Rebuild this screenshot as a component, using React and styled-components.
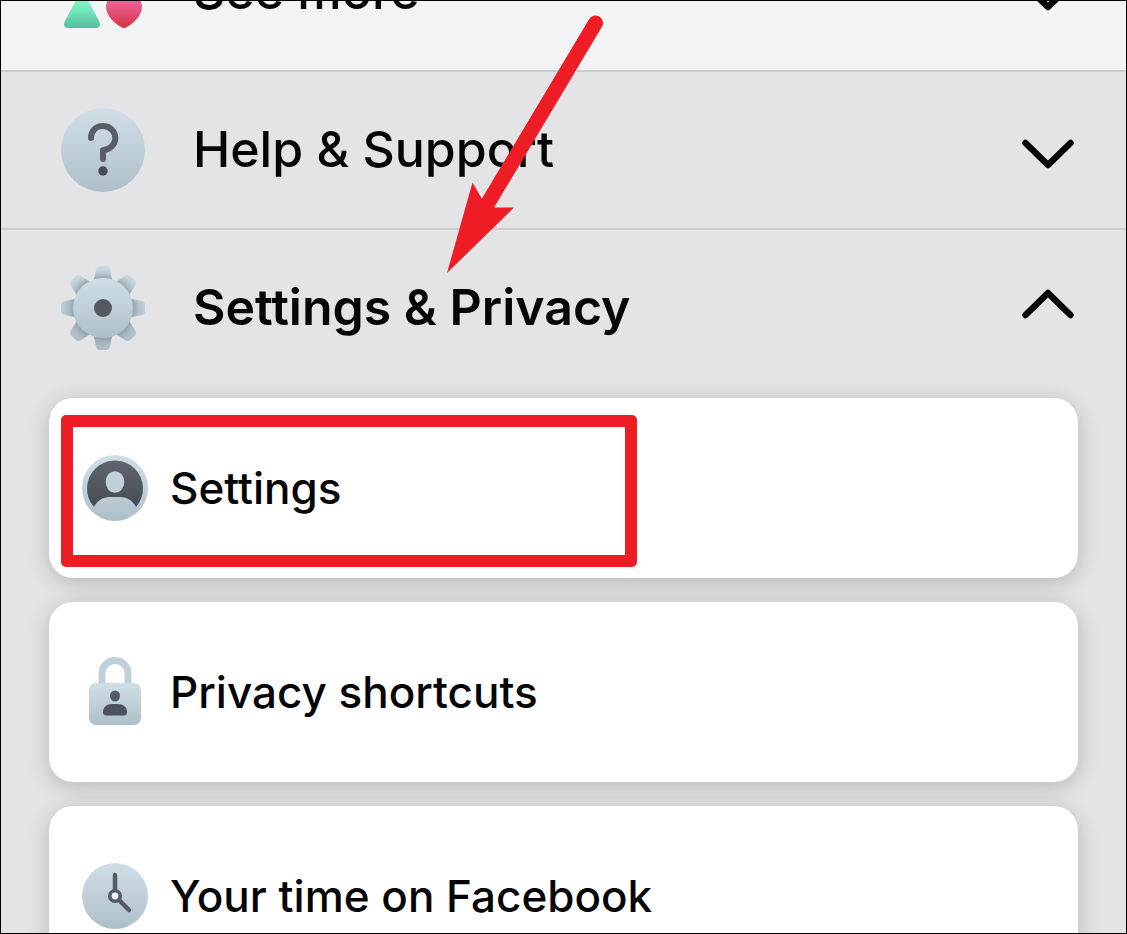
import { useState } from 'react';
import styled, { createGlobalStyle } from 'styled-components';

const GlobalStyle = createGlobalStyle`

*{
    box-sizing: border-box;
}

body{
    margin: 0;
    background: #e4e4e6;
    font-family: Inter, "Liberation Sans", sans-serif;
    color: #050505;
}

button{
    font: inherit;
    color: inherit;
}
`;

const Gradients = () => (
    <HiddenDefs aria-hidden="true" width="0" height="0">
        <defs>
            <linearGradient id="steel" x1="0" y1="0" x2="0" y2="1">
                <stop offset="0" stopColor="#d0dfe6" />
                <stop offset="1" stopColor="#afbfca" />
            </linearGradient>
            <linearGradient id="slate" x1="0" y1="0" x2="0" y2="1">
                <stop offset="0" stopColor="#606570" />
                <stop offset="1" stopColor="#464b53" />
            </linearGradient>
            <linearGradient id="green" x1="0" y1="0" x2="0" y2="1">
                <stop offset="0.1" stopColor="#7ff5c5" />
                <stop offset="0.5" stopColor="#76e9bb" />
                <stop offset="1" stopColor="#51bd9b" />
            </linearGradient>
            <linearGradient id="pink" x1="0" y1="0" x2="0" y2="1">
                <stop offset="0.1" stopColor="#ec67a0" />
                <stop offset="0.9" stopColor="#d93a4b" />
            </linearGradient>
            <radialGradient id="toothShade" gradientUnits="userSpaceOnUse" cx="42" cy="42" r="42">
                <stop offset="0.7" stopColor="#66757f" stopOpacity="0.5" />
                <stop offset="0.88" stopColor="#82929c" stopOpacity="0.15" />
                <stop offset="1" stopColor="#82929c" stopOpacity="0" />
            </radialGradient>
            <linearGradient id="gearSteel" gradientUnits="userSpaceOnUse" x1="0" y1="0" x2="0" y2="84">
                <stop offset="0" stopColor="#d0dfe6" />
                <stop offset="1" stopColor="#afbfca" />
            </linearGradient>
        </defs>
    </HiddenDefs>
);

const ShapesIcon = () => (
    <RowIcon viewBox="0 0 84 84" aria-hidden="true">
        <rect x="3" y="6" width="36" height="34" rx="6" fill="#5aa7f5" />
        <circle cx="63" cy="23" r="18" fill="#f7c64b" />
        <path d="M17.500 45.500Q21 39.500 24.500 45.500L38.300 71.500Q40.500 78 34.500 78H7.500Q1.500 78 3.700 71.500Z" fill="url(#green)" />
        <path d="M63 48C56 43 45 47 45 56.500C45 66 54 74 61 77.500Q63 78.500 65 77.500C72 74 81 66 81 56.500C81 47 70 43 63 48Z" fill="url(#pink)" />
    </RowIcon>
);

const HelpIcon = () => (
    <RowIcon viewBox="0 0 84 84" aria-hidden="true">
        <circle cx="42" cy="42" r="42" fill="url(#steel)" />
        <path d="M30 30C30 22.500 35.300 18 42 18C49 18 54.300 23.500 54.300 30C54.300 36.500 49 41.800 42 42.300V51" fill="none" stroke="#595e68" strokeWidth="6" strokeLinecap="round" strokeLinejoin="round" />
        <circle cx="42" cy="63" r="4.700" fill="#484c52" />
    </RowIcon>
);

const TOOTH = 'M31.500 20L35 3.500Q35.700 0 39 0H45Q48.300 0 49 3.500L52.500 20Z';
const ANGLES = [0, 45, 90, 135, 180, 225, 270, 315];

const GearIcon = () => (
    <RowIcon viewBox="0 0 84 84" aria-hidden="true">
        <clipPath id="teeth">
            {ANGLES.map((angle) => (
                <path key={angle} d={TOOTH} transform={`rotate(${angle} 42 42)`} />
            ))}
        </clipPath>
        <g clipPath="url(#teeth)">
            <rect width="84" height="84" fill="url(#gearSteel)" />
            <rect width="84" height="84" fill="url(#toothShade)" />
        </g>
        <circle cx="42" cy="42" r="30" fill="url(#steel)" />
        <circle cx="42" cy="42" r="9" fill="#545961" />
    </RowIcon>
);

const ProfileIcon = () => (
    <CardIcon viewBox="0 0 66 66" aria-hidden="true">
        <circle cx="33" cy="33" r="33" fill="url(#steel)" />
        <path d="M12 52A28 28 0 1 1 54 52C51 46 45.500 42 38 42H28C20.500 42 15 46 12 52Z" fill="url(#slate)" />
        <ellipse cx="33" cy="27" rx="9.300" ry="10.800" fill="#c0cfd8" />
    </CardIcon>
);

const LockIcon = () => (
    <CardIcon viewBox="0 0 66 66" aria-hidden="true">
        <path d="M20 28V14.500A13 13 0 0 1 46 14.500V28" fill="none" stroke="#c0d0d9" strokeWidth="7" />
        <rect x="7" y="24" width="52" height="42" rx="7" fill="url(#steel)" />
        <ellipse cx="33" cy="37" rx="5" ry="5.500" fill="#555a64" />
        <path d="M21 53C21 48 25 45 30 45H36C41 45 45 48 45 53Q45 56.500 42 56.500H24Q21 56.500 21 53Z" fill="#4e525c" />
    </CardIcon>
);

const ClockIcon = () => (
    <CardIcon viewBox="0 0 66 66" aria-hidden="true">
        <circle cx="33" cy="33" r="33" fill="url(#steel)" />
        <path d="M33 12V33L47 47" fill="none" stroke="#555a64" strokeWidth="4.500" strokeLinecap="round" />
        <circle cx="33" cy="33" r="5.200" fill="#f4f6f8" stroke="#555a64" strokeWidth="3.600" />
    </CardIcon>
);

const Chevron = ({ open }) => (
    <ChevronIcon viewBox="0 0 52 36" aria-hidden="true">
        <path d={open ? 'M3.500 25L26 3L48.500 25' : 'M3.500 11L26 33L48.500 11'} />
    </ChevronIcon>
);

const Section = ({ icon, title, light, last, strong, defaultOpen = false, children }) => {
    const [open, setOpen] = useState(defaultOpen);

    return (
        <StyledSection $light={light} $last={last}>
            <SectionButton type="button" aria-expanded={open} onClick={() => setOpen(!open)}>
                {icon}
                <SectionTitle $strong={strong}>{title}</SectionTitle>
                <Chevron open={open} />
            </SectionButton>
            {open && children}
        </StyledSection>
    );
};

const Card = ({ icon, label, marked }) => (
    <StyledCard href="#">
        {icon}
        <span>{label}</span>
        {marked && <Marker />}
    </StyledCard>
);

export default function App() {
    return (
        <Screen>
            <GlobalStyle />
            <Gradients />
            <Menu>
                <Section icon={<ShapesIcon />} title="See more" light />
                <Section icon={<HelpIcon />} title="Help & Support" />
                <Section icon={<GearIcon />} title="Settings & Privacy" strong last defaultOpen>
                    <Cards>
                        <Card icon={<ProfileIcon />} label="Settings" marked />
                        <Card icon={<LockIcon />} label="Privacy shortcuts" />
                        <Card icon={<ClockIcon />} label="Your time on Facebook" />
                    </Cards>
                </Section>
            </Menu>
            <Arrow viewBox="0 0 170 266" aria-hidden="true">
                <path d="M155.500 15L48 195" stroke="#ee1d25" strokeWidth="15" strokeLinecap="round" />
                <path d="M7 265L32.500 174.500L42 191L55 199.500H74Z" fill="#ee1d25" />
            </Arrow>
        </Screen>
    );
}

const Screen = styled.main`
    position: relative;
    height: 100vh;
    overflow: hidden;
    border: 1px solid #000;
`;

const HiddenDefs = styled.svg`
    position: absolute;
`;

/* the list is scrolled past the top of the first row */
const Menu = styled.div`
    margin-top: -87px;
`;

const StyledSection = styled.section`
    background: ${({ $light }) => ($light ? '#f2f3f5' : '#e4e4e6')};
    border-bottom: ${({ $last }) => ($last ? '0' : '2px solid #cbcbcd')};
`;

const SectionButton = styled.button`
    width: 100%;
    height: 156px;
    padding: 0 52px 0 60px;

    display: flex;
    align-items: center;
    gap: 48px;

    background: none;
    border: 0;
    text-align: left;
    cursor: pointer;
`;

const SectionTitle = styled.span`
    flex: 1;
    padding-bottom: 2px;
    font-size: 50px;
    line-height: 60px;
    font-weight: ${({ $strong }) => ($strong ? 600 : 500)};
`;

const RowIcon = styled.svg`
    flex: none;
    width: 84px;
    height: 84px;
`;

const CardIcon = styled.svg`
    flex: none;
    width: 66px;
    height: 66px;
    overflow: visible;
`;

const ChevronIcon = styled.svg`
    flex: none;
    width: 52px;
    height: 36px;
    overflow: visible;

    path{
        fill: none;
        stroke: #050505;
        stroke-width: 6.500;
        stroke-linecap: round;
        stroke-linejoin: round;
    }
`;

const Cards = styled.div`
    padding: 12px 48px 24px;

    display: flex;
    flex-direction: column;
    gap: 24px;
`;

const StyledCard = styled.a`
    position: relative;
    min-height: 180px;
    padding: 0 33px;

    display: flex;
    align-items: center;
    gap: 22px;

    background: #fff;
    border-radius: 24px;
    box-shadow: 0 4px 22px rgba(0,0,0,.2);

    color: #050505;
    font-size: 44px;
    line-height: 54px;
    font-weight: 500;
    text-decoration: none;
`;

const Marker = styled.span`
    position: absolute;
    top: 17px;
    left: 12px;
    width: 576px;
    height: 152px;
    border: 12px solid #ee1d25;
    border-radius: 5px;
    pointer-events: none;
`;

const Arrow = styled.svg`
    position: absolute;
    top: 7px;
    left: 439px;
    width: 170px;
    height: 266px;
    pointer-events: none;
`;
